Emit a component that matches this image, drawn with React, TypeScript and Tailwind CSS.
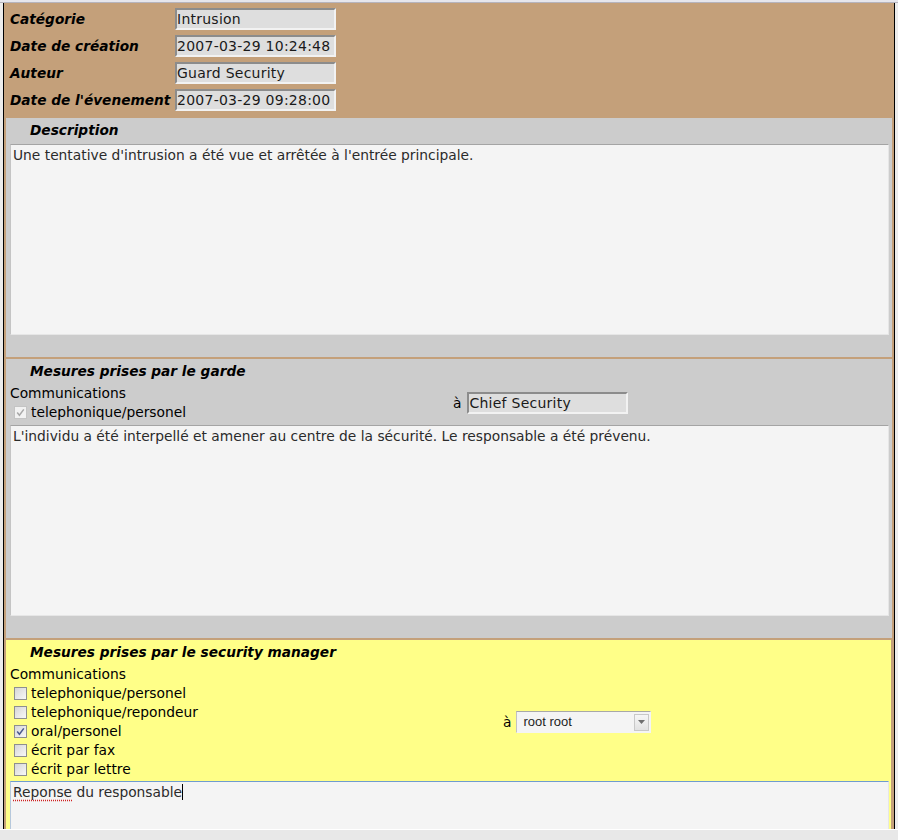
import React from "react";

const header = [
  { label: "Catégorie", value: "Intrusion" },
  { label: "Date de création", value: "2007-03-29 10:24:48" },
  { label: "Auteur", value: "Guard Security" },
  { label: "Date de l'évenement", value: "2007-03-29 09:28:00" },
];

const managerComms = [
  { text: "telephonique/personel", checked: false },
  { text: "telephonique/repondeur", checked: false },
  { text: "oral/personel", checked: true },
  { text: "écrit par fax", checked: false },
  { text: "écrit par lettre", checked: false },
];

const Box = ({ checked, disabled }: { checked: boolean; disabled?: boolean }) => (
  <span
    className={`inline-flex items-center justify-center w-[13px] h-[13px] border ${
      disabled
        ? "border-[#c4c4c4] bg-[#f2f2f2]"
        : "border-[#8e8f8f] bg-gradient-to-br from-[#d6d6d6] to-[#f8f8f8]"
    }`}
  >
    {checked && (
      <svg width="11" height="11" viewBox="0 0 11 11">
        <path
          d="M2.2 5.6 L4.4 8.2 L8.8 2.4"
          fill="none"
          stroke={disabled ? "#a8a8a8" : "#4b5a8f"}
          strokeWidth="1.5"
        />
      </svg>
    )}
  </span>
);

const Field = ({ value }: { value: string }) => (
  <div className="w-[161px] h-[22px] border-2 border-t-[#8c8c8c] border-l-[#8c8c8c] border-b-[#f2f2f2] border-r-[#f2f2f2] bg-[#dedede] flex items-center text-[14px] tracking-[0.25px] text-[#1a1a1a] leading-none whitespace-nowrap overflow-hidden">
    {value}
  </div>
);

const Title = ({ children }: { children: React.ReactNode }) => (
  <div className="h-[25px] flex items-center pl-[24px] font-bold italic text-[13.7px]">{children}</div>
);

export default function App() {
  return (
    <div className="w-[898px] h-[840px] bg-[#ececec] overflow-hidden flex flex-col font-['DejaVu_Sans','Verdana',sans-serif] text-black">
      <div className="h-[3px] shrink-0 bg-[#e6e6ec] border-b border-[#b6b4bd]" />

      <div className="flex-1 mx-[3px] border-l border-r border-black bg-[#c4a07a] overflow-hidden flex flex-col gap-[2px]">
        {/* entête */}
        <div className="flex flex-col gap-[5px] pt-[5px] pb-[5px] pl-[6px]">
          {header.map((row) => (
            <div key={row.label} className="flex items-center h-[22px]">
              <div className="w-[165px] font-bold italic text-[13.7px] whitespace-nowrap">{row.label}</div>
              <Field value={row.value} />
            </div>
          ))}
        </div>

        {/* description */}
        <div className="mx-[2px] bg-[#cccccc] pb-[22px]">
          <Title>Description</Title>
          <div className="ml-[4px] mr-[3px] mt-[1px] h-[191px] bg-[#f4f4f4] border border-t-[#a4a4a4] border-l-[#c4c4c4] border-r-[#e6e6e6] border-b-[#e6e6e6] px-[2px] pt-[2px] text-[13.8px] leading-[17px] text-[#2b2b2b]">
            Une tentative d'intrusion a été vue et arrêtée à l'entrée principale.
          </div>
        </div>

        {/* mesures garde */}
        <div className="mx-[2px] bg-[#cccccc] pb-[22px]">
          <Title>Mesures prises par le garde</Title>
          <div className="flex items-center">
            <div className="w-[447px] pl-[4px] text-[13.8px]">
              <div className="h-[19px] flex items-center">Communications</div>
              <div className="h-[19px] flex items-center gap-[4px] pl-[4px]">
                <Box checked disabled />
                <span>telephonique/personel</span>
              </div>
            </div>
            <div className="flex items-center gap-[6px] text-[13.8px]">
              <span>à</span>
              <Field value="Chief Security" />
            </div>
          </div>
          <div className="ml-[4px] mr-[3px] mt-[3px] h-[191px] bg-[#f4f4f4] border border-t-[#a4a4a4] border-l-[#c4c4c4] border-r-[#e6e6e6] border-b-[#e6e6e6] px-[2px] pt-[2px] text-[13.8px] leading-[17px] text-[#2b2b2b]">
            L'individu a été interpellé et amener au centre de la sécurité. Le responsable a été prévenu.
          </div>
        </div>

        {/* mesures security manager */}
        <div className="ml-[2px] mr-[3px] bg-[#ffff88] flex-1">
          <Title>Mesures prises par le security manager</Title>
          <div className="flex items-center">
            <div className="w-[497px] pl-[4px] text-[13.8px]">
              <div className="h-[19px] flex items-center">Communications</div>
              {managerComms.map((c) => (
                <div key={c.text} className="h-[19px] flex items-center gap-[4px] pl-[4px]">
                  <Box checked={c.checked} />
                  <span>{c.text}</span>
                </div>
              ))}
            </div>
            <div className="flex items-center gap-[5px] text-[13.8px]">
              <span>à</span>
              <div className="w-[135px] h-[22px] flex items-center justify-between bg-[#f4f4f4] border border-t-[#a8a8a8] border-l-[#c2c2c2] border-r-[#f4f4f4] border-b-[#f4f4f4]">
                <span className="pl-[6px] font-['Liberation_Sans',Arial,sans-serif] text-[13px] text-[#1e1e1e]">root root</span>
                <span className="w-[15px] h-[17px] mr-[1px] flex items-center justify-center bg-gradient-to-b from-[#f6f6f6] to-[#e2e2e2] border border-[#c8c8c8]">
                  <svg width="7" height="4" viewBox="0 0 7 4">
                    <path d="M0 0 H7 L3.5 4 Z" fill="#6e6e6e" />
                  </svg>
                </span>
              </div>
            </div>
          </div>
          <div className="ml-[4px] mr-[2px] mt-[2px] h-[191px] bg-[#f4f4f4] border border-t-[#6f9ccf] border-l-[#b6c8dc] border-r-[#e6e6e6] border-b-[#e6e6e6] px-[2px] pt-[2px] text-[13.8px] leading-[17px] text-[#2b2b2b]">
            <span className="underline decoration-dotted decoration-[#d02020] underline-offset-[3px]">Reponse</span> du responsable
            <span className="inline-block w-px h-[16px] bg-black align-[-3px]" />
          </div>
        </div>
      </div>

      <div className="h-[11px] shrink-0 bg-[#e8e8e8] border-t border-white" />
    </div>
  );
}
